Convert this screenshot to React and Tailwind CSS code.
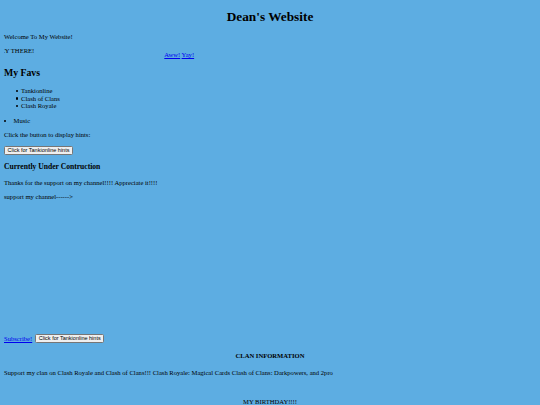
export default function App() {
  const btn =
    "inline-flex items-center h-[9px] px-[2.5px] bg-[#efefef] border border-[#767676] rounded-[1.5px] text-[5.5px] leading-none text-black font-['Liberation_Sans',Arial,sans-serif]";
  const favs = ["Tankionline", "Clash of Clans", "Clash Royale"];

  return (
    <div className="min-h-[405px] bg-[#5dade2] text-black font-['Liberation_Serif','Times_New_Roman',serif] text-[6.6px] leading-[7.5px] px-[4px] overflow-hidden">
      <h1 className="pt-[9px] text-center text-[13.3px] leading-[15px] font-bold">Dean's Website</h1>

      <p className="mt-[9px]">Welcome To My Website!</p>

      {/* marquee + links */}
      <div className="mt-[6.5px] h-[12px] whitespace-nowrap">
        <span className="inline-block align-baseline w-[159px] h-[9.5px] overflow-hidden">
          <span className="block ml-[-8px]">HEY THERE!</span>
        </span>{" "}
        <a href="#" className="text-[#0000ee] underline">Aww!</a>{" "}
        <a href="#" className="text-[#0000ee] underline">Yay!</a>
      </div>

      <h2 className="mt-[7.5px] text-[9.75px] leading-[11px] font-bold">My Favs</h2>

      <ul className="mt-[9.5px] pl-[17px]">
        {favs.map((f) => (
          <li key={f} className="flex items-center">
            <span className="w-[2.5px] h-[2.5px] rounded-full bg-black ml-[-5.5px] mr-[3px]" />
            {f}
          </li>
        ))}
      </ul>

      <ul className="mt-[7px] list-disc list-inside">
        <li>Music</li>
      </ul>

      <p className="mt-[7px]">Click the button to display hints:</p>

      <div className="mt-[7.5px] h-[9px] flex">
        <button className={btn}>Click for Tankionline hints</button>
      </div>

      <h3 className="mt-[7px] text-[7.6px] leading-[9px] font-bold">Currently Under Contruction</h3>

      <p className="mt-[8px]">Thanks for the support on my channel!!!! Appreciate it!!!!</p>
      <p className="mt-[6.5px]">support my channel------&gt;</p>

      <div className="mt-[133.5px] h-[9px] flex items-center gap-[3px]">
        <a href="#" className="text-[#0000ee] underline">Subscribe!</a>
        <button className={btn}>Click for Tankionline hints</button>
      </div>

      <p className="mt-[9px] text-center font-bold">CLAN INFORMATION</p>

      <p className="mt-[9.5px]">
        Support my clan on Clash Royale and Clash of Clans!!! Clash Royale: Magical Cards Clash of Clans: Darkpowers, and 2pro
      </p>

      <p className="mt-[21.5px] text-center">MY BIRTHDAY!!!!</p>
    </div>
  );
}
